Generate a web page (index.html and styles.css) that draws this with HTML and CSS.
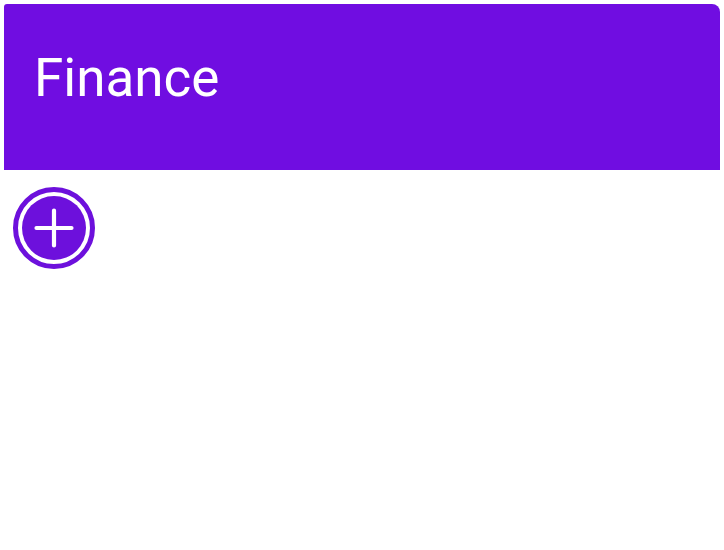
FILE: index.html
```html
<!DOCTYPE html>
<html>
<head>
<meta charset="utf-8">
<link rel="stylesheet" href="styles.css">
</head>
<body>
<div class="page">
  <header class="app-bar">
    <h1 class="title">Finance</h1>
  </header>
  <div class="actions">
    <button class="add-btn" aria-label="Add">
      <svg width="84" height="84" viewBox="0 0 84 84">
        <circle cx="42" cy="42" r="38.5" fill="none" stroke="#6d10dc" stroke-width="5"/>
        <circle cx="42" cy="42" r="32" fill="#6d10dc"/>
        <path d="M24.5 42H59.5M42 24.5V59.5" stroke="#ffffff" stroke-width="4.2" stroke-linecap="round"/>
      </svg>
    </button>
  </div>
</div>
</body>
</html>
```
FILE: styles.css
```css
html, body {
  margin: 0;
  padding: 0;
  background: #ffffff;
}
.page {
  padding: 4px;
  font-family: Roboto, "Noto Sans", sans-serif;
}
.app-bar {
  height: 166px;
  background: #700de1;
  border-radius: 3px 8px 0 0;
  padding: 0 0 0 30px;
  box-sizing: border-box;
}
.title {
  margin: 0;
  padding-top: 40px;
  font-size: 53px;
  font-weight: 400;
  line-height: 68px;
  color: #ffffff;
}
.actions {
  padding: 16px 0 0 8px;
}
.add-btn {
  display: block;
  border: 0;
  padding: 0;
  margin: 0;
  background: none;
  width: 84px;
  height: 84px;
}
.add-btn svg {
  display: block;
}
```
